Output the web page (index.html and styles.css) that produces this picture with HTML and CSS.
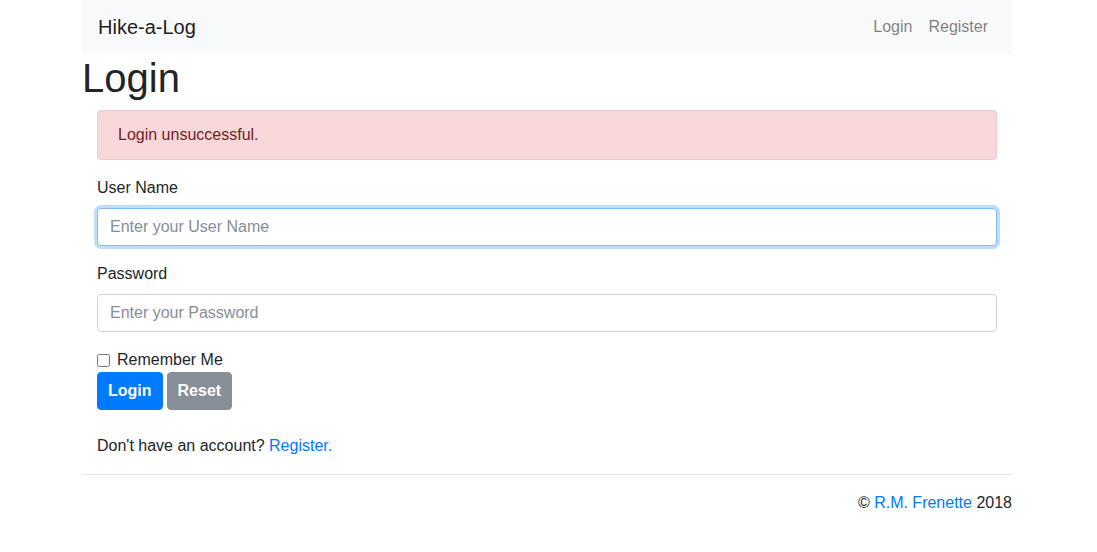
FILE: index.html
```html
<!DOCTYPE html>
<html lang="en">
<head>
<meta charset="utf-8">
<title>Login - Hike-a-Log</title>
<link rel="stylesheet" href="styles.css">
</head>
<body>
<div class="container">
  <nav class="navbar">
    <a class="brand" href="#">Hike-a-Log</a>
    <div class="nav-links">
      <a class="nav-link" href="#">Login</a>
      <a class="nav-link" href="#">Register</a>
    </div>
  </nav>
  <h1 class="page-title">Login</h1>
  <div class="content">
    <div class="alert">Login unsuccessful.</div>
    <form class="login-form">
      <div class="form-group">
        <label class="form-label" for="username">User Name</label>
        <input class="form-control is-focused" id="username" type="text" placeholder="Enter your User Name">
      </div>
      <div class="form-group">
        <label class="form-label" for="password">Password</label>
        <input class="form-control" id="password" type="password" placeholder="Enter your Password">
      </div>
      <div class="check-row">
        <input class="check" id="remember" type="checkbox">
        <label for="remember">Remember Me</label>
      </div>
      <div class="actions">
        <button class="btn btn-primary" type="submit">Login</button>
        <button class="btn btn-secondary" type="reset">Reset</button>
      </div>
    </form>
    <p class="register-line">Don't have an account? <a class="link" href="#">Register.</a></p>
  </div>
  <footer class="footer">
    <hr class="rule">
    <p class="copyright">&copy; <a class="link" href="#">R.M. Frenette</a> 2018</p>
  </footer>
</div>
</body>
</html>
```

FILE: styles.css
```css
* { box-sizing: border-box; }

body {
  margin: 0;
  font-family: "Liberation Sans", Arial, sans-serif;
  font-size: 16px;
  line-height: 24px;
  color: #212529;
  background: #fff;
}

.container {
  width: 930px;
  margin: 0 0 0 82px;
}

.navbar {
  display: flex;
  justify-content: space-between;
  align-items: center;
  height: 54px;
  padding: 8px 16px;
  background: #f8f9fa;
}

.brand {
  font-size: 20px;
  line-height: 30px;
  color: rgba(0, 0, 0, 0.9);
  text-decoration: none;
}

.nav-links {
  display: flex;
}

.nav-link {
  padding: 8px;
  color: rgba(0, 0, 0, 0.5);
  text-decoration: none;
}

.page-title {
  margin: 0 0 8px;
  font-size: 40px;
  line-height: 48px;
  font-weight: 500;
}

.content {
  padding: 0 15px;
}

.alert {
  padding: 12px 20px;
  margin-bottom: 16px;
  border: 1px solid #f5c6cb;
  border-radius: 4px;
  background: #f8d7da;
  color: #721c24;
}

.form-group {
  margin-bottom: 16px;
}

.form-label {
  display: inline-block;
  margin-bottom: 8px;
}

.form-control {
  display: block;
  width: 100%;
  height: 38px;
  padding: 6px 12px;
  font-family: inherit;
  font-size: 16px;
  line-height: 24px;
  color: #495057;
  background: #fff;
  border: 1px solid #ced4da;
  border-radius: 4px;
  outline: none;
}

.form-control::placeholder {
  color: #868e96;
  opacity: 1;
}

.form-control.is-focused {
  border-color: #80bdff;
  box-shadow: 0 0 0 3px rgba(0, 123, 255, 0.25);
}

.check-row {
  display: flex;
  align-items: center;
  gap: 7px;
  height: 24px;
}

.check {
  width: 13px;
  height: 13px;
  margin: 0;
}

.actions {
  display: flex;
  gap: 4px;
  margin-bottom: 24px;
}

.btn {
  height: 38px;
  padding: 0 10px;
  font-family: inherit;
  font-size: 16px;
  font-weight: bold;
  line-height: 24px;
  color: #fff;
  border: 1px solid transparent;
  border-radius: 4px;
}

.btn-primary {
  background: #007bff;
  border-color: #007bff;
}

.btn-secondary {
  background: #868e96;
  border-color: #868e96;
}

.register-line {
  margin: 0 0 16px;
}

.link {
  color: #007bff;
  text-decoration: none;
}

.rule {
  margin: 0 0 16px;
  border: 0;
  border-top: 1px solid rgba(0, 0, 0, 0.1);
}

.copyright {
  margin: 0;
  text-align: right;
}
```
